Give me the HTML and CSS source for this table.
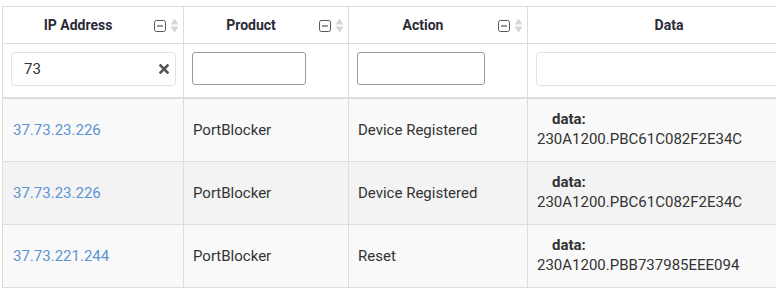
FILE: index.html
```html
<!DOCTYPE html>
<html>
<head>
<meta charset="utf-8">
<link rel="stylesheet" href="styles.css">
</head>
<body>
<div class="wrap">
<table class="grid">
  <colgroup>
    <col class="c-ip"><col class="c-prod"><col class="c-act"><col class="c-data">
  </colgroup>
  <thead>
    <tr class="head">
      <th class="sortable"><span class="label">IP Address</span>
        <span class="tools">
          <svg class="mini" width="12" height="12" viewBox="0 0 12 12"><rect x="0.5" y="0.5" width="11" height="11" rx="2" fill="none" stroke="#555" stroke-width="1"/><path d="M3 6h6" stroke="#555" stroke-width="1.2"/></svg>
          <svg class="sort" width="9" height="15" viewBox="0 0 9 15"><path d="M4.5 0.5L8.5 6.5H0.5Z" fill="#d6d6d6"/><path d="M4.5 14.5L8.5 8.5H0.5Z" fill="#d6d6d6"/></svg>
        </span>
      </th>
      <th class="sortable"><span class="label">Product</span>
        <span class="tools">
          <svg class="mini" width="12" height="12" viewBox="0 0 12 12"><rect x="0.5" y="0.5" width="11" height="11" rx="2" fill="none" stroke="#555" stroke-width="1"/><path d="M3 6h6" stroke="#555" stroke-width="1.2"/></svg>
          <svg class="sort" width="9" height="15" viewBox="0 0 9 15"><path d="M4.5 0.5L8.5 6.5H0.5Z" fill="#d6d6d6"/><path d="M4.5 14.5L8.5 8.5H0.5Z" fill="#d6d6d6"/></svg>
        </span>
      </th>
      <th class="sortable"><span class="label">Action</span>
        <span class="tools">
          <svg class="mini" width="12" height="12" viewBox="0 0 12 12"><rect x="0.5" y="0.5" width="11" height="11" rx="2" fill="none" stroke="#555" stroke-width="1"/><path d="M3 6h6" stroke="#555" stroke-width="1.2"/></svg>
          <svg class="sort" width="9" height="15" viewBox="0 0 9 15"><path d="M4.5 0.5L8.5 6.5H0.5Z" fill="#d6d6d6"/><path d="M4.5 14.5L8.5 8.5H0.5Z" fill="#d6d6d6"/></svg>
        </span>
      </th>
      <th class="plain"><span class="label">Data</span></th>
    </tr>
    <tr class="filters">
      <td><div class="search"><input class="in in-soft" type="text" value="73"><svg class="clear" width="10" height="10" viewBox="0 0 10 10"><path d="M1.5 1.5L8.5 8.5M8.5 1.5L1.5 8.5" stroke="#555" stroke-width="2.6" stroke-linecap="square"/></svg></div></td>
      <td><input class="in in-hard in-prod" type="text"></td>
      <td><input class="in in-hard in-act" type="text"></td>
      <td><input class="in in-soft in-data" type="text"></td>
    </tr>
  </thead>
  <tbody>
    <tr class="odd">
      <td><a class="ip" href="#">37.73.23.226</a></td>
      <td>PortBlocker</td>
      <td>Device Registered</td>
      <td class="data"><b>data:</b><span>230A1200.PBC61C082F2E34C</span></td>
    </tr>
    <tr class="even">
      <td><a class="ip" href="#">37.73.23.226</a></td>
      <td>PortBlocker</td>
      <td>Device Registered</td>
      <td class="data"><b>data:</b><span>230A1200.PBC61C082F2E34C</span></td>
    </tr>
    <tr class="odd">
      <td><a class="ip" href="#">37.73.221.244</a></td>
      <td>PortBlocker</td>
      <td>Reset</td>
      <td class="data"><b>data:</b><span>230A1200.PBB737985EEE094</span></td>
    </tr>
  </tbody>
</table>
</div>
</body>
</html>
```

FILE: styles.css
```css
html, body {
  margin: 0;
  padding: 0;
  background: #fff;
  overflow: hidden;
}
body {
  font-family: Roboto, "Liberation Sans", sans-serif;
  font-size: 15px;
  color: #333;
}
.wrap {
  padding: 6px 0 0 2px;
  width: 900px;
}
.grid {
  border-collapse: collapse;
  table-layout: fixed;
  width: 808px;
}
.c-ip { width: 181px; }
.c-prod { width: 165px; }
.c-act { width: 179px; }
.c-data { width: 283px; }

.grid th, .grid td {
  border: 1px solid #dddddd;
  padding: 0 9px;
  text-align: left;
  vertical-align: middle;
}
.head th {
  height: 36px;
  font-size: 14px;
  font-weight: 700;
  color: #2b2b36;
  text-align: center;
  position: relative;
  padding: 0;
}
.head th.sortable {
  padding-right: 30px;
}
.tools {
  position: absolute;
  right: 4px;
  top: 11px;
  display: flex;
  align-items: center;
  gap: 4px;
}
.filters td {
  height: 54px;
  border-bottom: 2px solid #dddddd;
  padding: 0 8px;
  vertical-align: top;
  padding-top: 8px;
  box-sizing: border-box;
}
.search {
  position: relative;
  width: 165px;
}
.in {
  box-sizing: border-box;
  font-family: Roboto, "Liberation Sans", sans-serif;
  font-size: 15px;
  color: #333;
  outline: none;
  margin: 0;
  display: block;
}
.in-soft {
  border: 1px solid #e2e2e2;
  border-radius: 4px;
  height: 34px;
  width: 165px;
  padding: 0 28px 0 12px;
}
.in-hard {
  border: 1px solid #9a9a9a;
  border-radius: 3px;
  height: 33px;
  padding: 0 6px;
}
.in-prod { width: 114px; }
.in-act { width: 128px; }
.in-data { width: 260px; padding: 0 8px; }
.clear {
  position: absolute;
  right: 7px;
  top: 12px;
}
tbody td {
  height: 62px;
  padding-left: 9px;
}
tbody td:first-child { padding-left: 10px; }
.odd td { background: #f9f9f9; }
.even td { background: #f3f3f3; }
.ip {
  color: #5b95d2;
  text-decoration: none;
}
.data b {
  display: block;
  padding-left: 15px;
  line-height: 20px;
  color: #333;
}
.data span {
  display: block;
  line-height: 21px;
}
```
